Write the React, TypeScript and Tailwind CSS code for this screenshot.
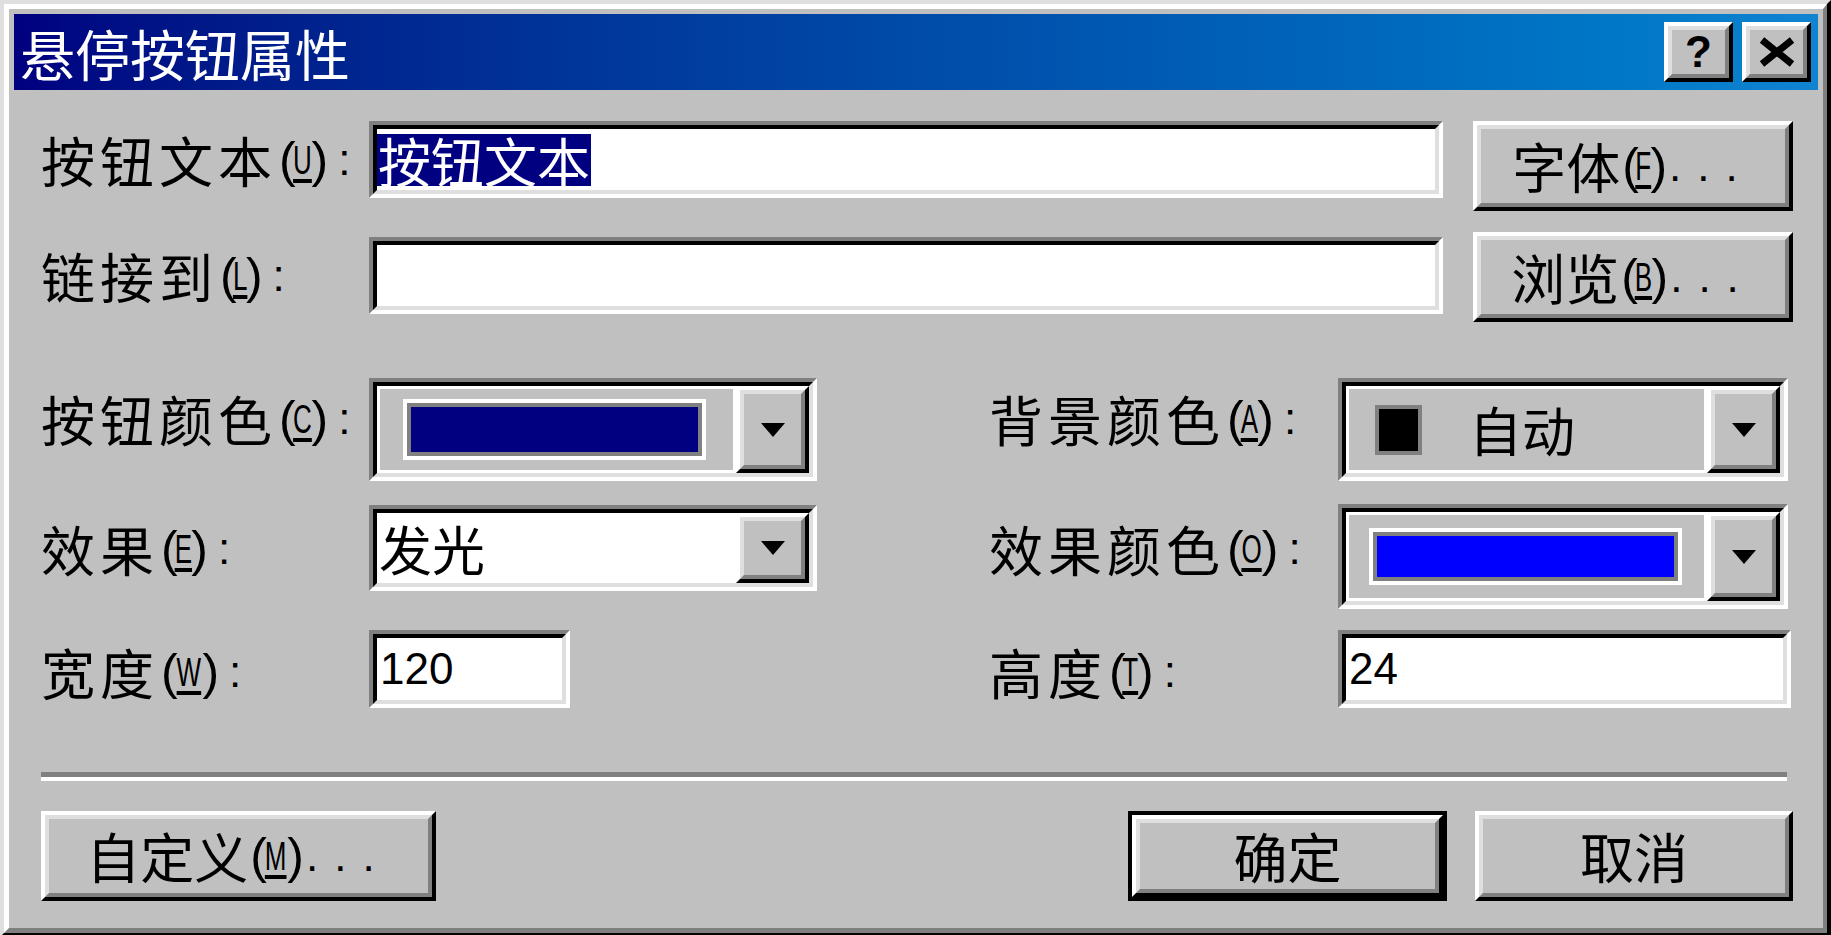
import React from "react";

const CJK = "font-['Noto_Sans_CJK_SC','Liberation_Sans',sans-serif]";
const LAT = "font-['Liberation_Sans',sans-serif]";

type BoxProps = { className?: string; inner?: string; children?: React.ReactNode };

function Sunken({ className = "", inner = "", children }: BoxProps) {
	return (
		<div className={"border-4 border-t-[#808080] border-l-[#808080] border-r-white border-b-white " + className}>
			<div className={"h-full w-full border-4 border-t-black border-l-black border-r-[#dfdfdf] border-b-[#dfdfdf] " + inner}>
				{children}
			</div>
		</div>
	);
}

function Raised({ className = "", inner = "", children }: BoxProps) {
	return (
		<div className={"border-4 border-t-white border-l-white border-r-black border-b-black " + className}>
			<div className={"h-full w-full border-4 border-t-[#dfdfdf] border-l-[#dfdfdf] border-r-[#808080] border-b-[#808080] bg-[#c0c0c0] " + inner}>
				{children}
			</div>
		</div>
	);
}

// mnemonic letter in parentheses, underlined like the old dialogs
function Mn({ k }: { k: string }) {
	return (
		<span className={"inline-flex items-center mx-[2px] tracking-normal " + LAT}>
			<span className="text-[50px] leading-none tracking-[-3px]">(</span>
			<span className="inline-block -mx-[5px] scale-x-[0.65] text-[40px] leading-none underline decoration-[4px] underline-offset-[5px]">{k}</span>
			<span className="text-[50px] leading-none">)</span>
		</span>
	);
}

function Label({ text, k, className = "" }: { text: string; k: string; className?: string }) {
	return (
		<div className={"flex items-center text-[54px] leading-none tracking-[5px] text-black " + className}>
			{text}
			<Mn k={k} />
			<span className={"ml-[8px] text-[44px] " + LAT}>:</span>
		</div>
	);
}

function Arrow() {
	return (
		<svg width="24" height="14" viewBox="0 0 24 14">
			<polygon points="0,0 24,0 12,14" fill="#000" />
		</svg>
	);
}

function DropBtn({ className = "" }: { className?: string }) {
	return (
		<Raised className={"w-[73px] h-full shrink-0 " + className} inner="flex items-center justify-center">
			<Arrow />
		</Raised>
	);
}

function Swatch({ color, className = "" }: { color: string; className?: string }) {
	return (
		<div className={"border-4 border-white " + className}>
			<div className="h-full w-full border-4 border-[#808080]" style={{ background: color }} />
		</div>
	);
}

function DlgButton({ children, className = "" }: { children: React.ReactNode; className?: string }) {
	return (
		<Raised className={"h-[90px] " + className} inner="flex items-center justify-center text-[54px] leading-none text-black">
			{children}
		</Raised>
	);
}

export default function App() {
	return (
		<div className={"h-[935px] w-[1831px] overflow-hidden bg-[#c0c0c0] " + CJK}>
			<div className="h-[937px] w-[1831px] border-4 border-t-[#dfdfdf] border-l-[#dfdfdf] border-r-black border-b-black">
				<div className="h-full w-full border-t-[5px] border-l-[5px] border-r-4 border-b-[5px] border-t-white border-l-white border-r-[#808080] border-b-[#808080] bg-[#c0c0c0] p-[5px] flex flex-col">
					{/* title bar */}
					<div className="h-[76px] shrink-0 flex items-center bg-linear-to-r from-[#000080] to-[#1084d0] pl-[6px] pr-[7px]">
						<div className="text-[55px] leading-none text-white">悬停按钮属性</div>
						<div className="ml-auto flex gap-[9px]">
							<Raised className="w-[69px] h-[60px]" inner="flex items-center justify-center">
								<span className={"text-[44px] font-bold leading-none text-black " + LAT}>?</span>
							</Raised>
							<Raised className="w-[69px] h-[60px]" inner="flex items-center justify-center">
								<svg width="38" height="30" viewBox="0 0 38 30">
									<path d="M4 3 L34 27 M34 3 L4 27" stroke="#000" strokeWidth="7" />
								</svg>
							</Raised>
						</div>
					</div>

					{/* body */}
					<div className="flex flex-col pl-[27px] pr-[25px]">
						{/* text row */}
						<div className="mt-[31px] flex items-start">
							<Label text="按钮文本" k="U" className="w-[328px] h-[77px]" />
							<Sunken className="w-[1074px] h-[77px] bg-white" inner="flex items-center pl-0">
								<span className="bg-[#000080] text-white text-[53px] leading-[52px] px-[1px]">按钮文本</span>
							</Sunken>
							<DlgButton className="ml-[30px] w-[320px] h-[89px]">
								字体
								<Mn k="F" />
								<span className={"text-[44px] tracking-[16px] " + LAT}>...</span>
							</DlgButton>
						</div>

						{/* link row */}
						<div className="mt-[21px] flex items-start">
							<Label text="链接到" k="L" className="w-[328px] h-[77px] mt-[5px]" />
							<Sunken className="w-[1074px] h-[77px] mt-[5px] bg-white" />
							<DlgButton className="ml-[30px] w-[320px] h-[89px]">
								浏览
								<Mn k="B" />
								<span className={"text-[44px] tracking-[16px] " + LAT}>...</span>
							</DlgButton>
						</div>

						{/* colour rows */}
						<div className="mt-[56px] flex items-start">
							<div className="w-[948px] flex items-start">
								<Label text="按钮颜色" k="C" className="w-[328px] mt-[14px]" />
								<Sunken className="w-[448px] h-[103px] bg-[#c0c0c0]" inner="flex">
									<div className="flex-1 flex items-center pl-[23px] border-[3px] border-white">
										<Swatch color="#000080" className="w-[303px] h-[61px]" />
									</div>
									<DropBtn />
								</Sunken>
							</div>
							<div className="flex items-start">
								<Label text="背景颜色" k="A" className="w-[349px] mt-[14px] tracking-[3px]" />
								<Sunken className="w-[450px] h-[103px] bg-[#c0c0c0]" inner="flex">
									<div className="flex-1 flex items-center pl-[26px] border-[3px] border-white">
										<div className="w-[47px] h-[50px] border-4 border-[#808080] bg-black" />
										<span className="ml-[47px] text-[53px] leading-none text-black">自动</span>
									</div>
									<DropBtn />
								</Sunken>
							</div>
						</div>

						<div className="mt-[24px] flex items-start">
							<div className="w-[948px] flex items-start">
								<Label text="效果" k="E" className="w-[328px] mt-[17px]" />
								<Sunken className="w-[448px] h-[86px] bg-white" inner="flex">
									<div className="flex-1 flex items-center text-[53px] leading-none text-black pl-[2px]">发光</div>
									<DropBtn />
								</Sunken>
							</div>
							<div className="flex items-start">
								<Label text="效果颜色" k="O" className="w-[349px] mt-[17px] tracking-[3px]" />
								<Sunken className="w-[450px] h-[105px] -mt-[1px] bg-[#c0c0c0]" inner="flex">
									<div className="flex-1 flex items-center pl-[20px] border-[3px] border-white">
										<Swatch color="#0000ff" className="w-[313px] h-[57px]" />
									</div>
									<DropBtn />
								</Sunken>
							</div>
						</div>

						<div className="mt-[21px] flex items-start">
							<div className="w-[948px] flex items-start">
								<Label text="宽度" k="W" className="w-[328px] mt-[15px]" />
								<Sunken className="w-[201px] h-[78px] bg-white" inner={"flex items-center text-[44px] leading-none text-black pl-[3px] " + LAT}>
									120
								</Sunken>
							</div>
							<div className="flex items-start">
								<Label text="高度" k="T" className="w-[349px] mt-[15px] tracking-[3px]" />
								<Sunken className="w-[453px] h-[78px] bg-white" inner={"flex items-center text-[44px] leading-none text-black pl-[3px] " + LAT}>
									24
								</Sunken>
							</div>
						</div>

						{/* separator */}
						<div className="mt-[64px] w-[1746px] h-[9px] border-t-[5px] border-[#808080] bg-white" />

						{/* bottom buttons */}
						<div className="mt-[30px] flex items-start">
							<DlgButton className="w-[395px]">
								自定义
								<Mn k="M" />
								<span className={"text-[44px] tracking-[16px] " + LAT}>...</span>
							</DlgButton>
							<div className="ml-auto flex gap-[28px]">
								<div className="w-[319px] h-[90px] border-4 border-black">
									<Raised className="h-full w-full" inner="flex items-center justify-center text-[54px] leading-none text-black">
										确定
									</Raised>
								</div>
								<DlgButton className="w-[318px]">取消</DlgButton>
							</div>
						</div>
					</div>
				</div>
			</div>
		</div>
	);
}
